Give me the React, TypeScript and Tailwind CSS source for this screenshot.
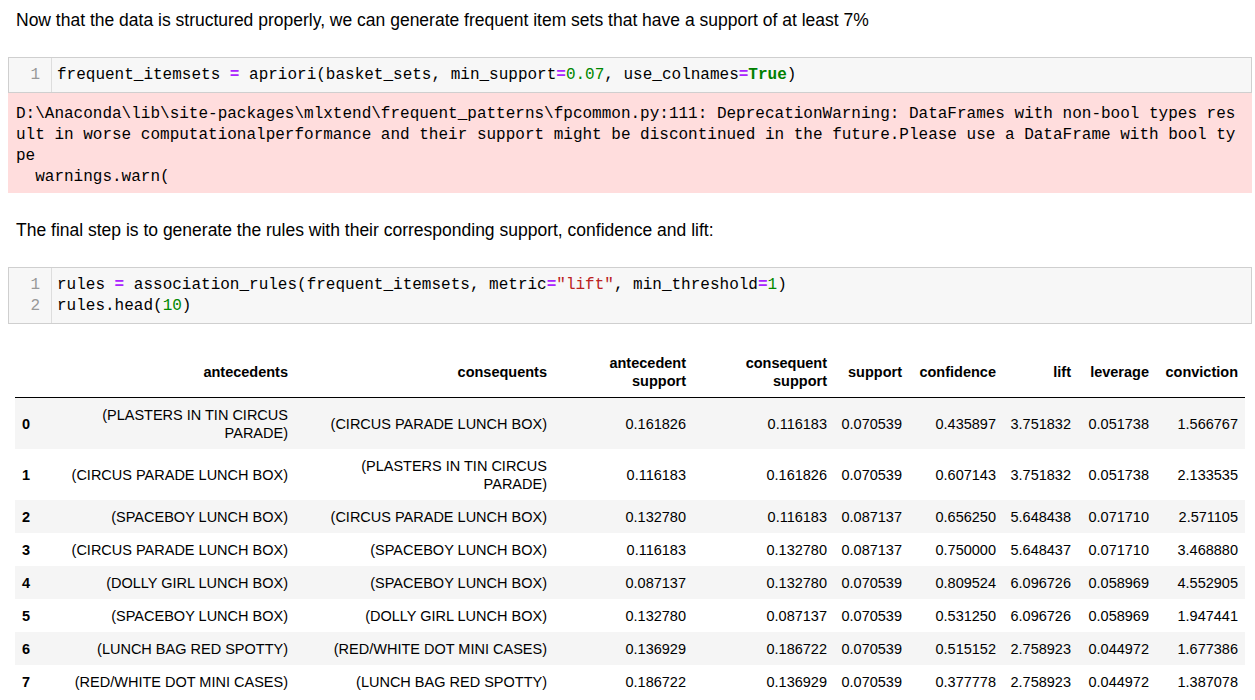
import React from 'react';

const rows = [
  ['0', '(PLASTERS IN TIN CIRCUS PARADE)', '(CIRCUS PARADE LUNCH BOX)', '0.161826', '0.116183', '0.070539', '0.435897', '3.751832', '0.051738', '1.566767'],
  ['1', '(CIRCUS PARADE LUNCH BOX)', '(PLASTERS IN TIN CIRCUS PARADE)', '0.116183', '0.161826', '0.070539', '0.607143', '3.751832', '0.051738', '2.133535'],
  ['2', '(SPACEBOY LUNCH BOX)', '(CIRCUS PARADE LUNCH BOX)', '0.132780', '0.116183', '0.087137', '0.656250', '5.648438', '0.071710', '2.571105'],
  ['3', '(CIRCUS PARADE LUNCH BOX)', '(SPACEBOY LUNCH BOX)', '0.116183', '0.132780', '0.087137', '0.750000', '5.648437', '0.071710', '3.468880'],
  ['4', '(DOLLY GIRL LUNCH BOX)', '(SPACEBOY LUNCH BOX)', '0.087137', '0.132780', '0.070539', '0.809524', '6.096726', '0.058969', '4.552905'],
  ['5', '(SPACEBOY LUNCH BOX)', '(DOLLY GIRL LUNCH BOX)', '0.132780', '0.087137', '0.070539', '0.531250', '6.096726', '0.058969', '1.947441'],
  ['6', '(LUNCH BAG RED SPOTTY)', '(RED/WHITE DOT MINI CASES)', '0.136929', '0.186722', '0.070539', '0.515152', '2.758923', '0.044972', '1.677386'],
  ['7', '(RED/WHITE DOT MINI CASES)', '(LUNCH BAG RED SPOTTY)', '0.186722', '0.136929', '0.070539', '0.377778', '2.758923', '0.044972', '1.387078'],
];

const headers = [
  { label: '', w: 'w-[49px]' },
  { label: 'antecedents', w: 'w-[231px]' },
  { label: 'consequents', w: 'w-[259px]' },
  { label: 'antecedent support', w: 'w-[139px]' },
  { label: 'consequent support', w: 'w-[141px]' },
  { label: 'support', w: 'w-[75px]' },
  { label: 'confidence', w: 'w-[94px]' },
  { label: 'lift', w: 'w-[75px]' },
  { label: 'leverage', w: 'w-[78px]' },
  { label: 'conviction', w: 'w-[89px]' },
];

const warning = [
  'D:\\Anaconda\\lib\\site-packages\\mlxtend\\frequent_patterns\\fpcommon.py:111: DeprecationWarning: DataFrames with non-bool types res',
  'ult in worse computationalperformance and their support might be discontinued in the future.Please use a DataFrame with bool ty',
  'pe',
  '  warnings.warn(',
];

function Op({ children }: { children: React.ReactNode }) {
  return <span className="text-[#aa22ff] font-bold">{children}</span>;
}

function Num({ children }: { children: React.ReactNode }) {
  return <span className="text-[#008800]">{children}</span>;
}

function CodeCell({ lines }: { lines: React.ReactNode[] }) {
  return (
    <div className="ml-2 mr-[3px] flex border border-[#cfcfcf] bg-[#f7f7f7] font-['Liberation_Mono',monospace] text-[16px] leading-[21px]">
      <div className="w-[43px] shrink-0 border-r border-[#dddddd] pt-[7px] pb-[6px] pr-[11px] text-right text-[#999999]">
        {lines.map((_, i) => (
          <div key={i}>{i + 1}</div>
        ))}
      </div>
      <div className="pt-[7px] pb-[6px] pl-[5px] text-black whitespace-pre">
        {lines.map((l, i) => (
          <div key={i}>{l}</div>
        ))}
      </div>
    </div>
  );
}

export default function App() {
  return (
    <div className="w-[1255px] min-h-[700px] bg-white text-black font-['Liberation_Sans',Arial,sans-serif]">
      <p className="pl-4 pt-2 text-[17.5px] leading-6">
        Now that the data is structured properly, we can generate frequent item sets that have a support of at least 7%
      </p>

      <div className="mt-[25px]">
        <CodeCell
          lines={[
            <>
              frequent_itemsets <Op>=</Op> apriori(basket_sets, min_support<Op>=</Op>
              <Num>0.07</Num>, use_colnames<Op>=</Op>
              <span className="font-bold text-[#008000]">True</span>)
            </>,
          ]}
        />
        <div className="ml-2 mr-[3px] bg-[#ffdddd] pt-[11px] pb-[5px] pl-2 font-['Liberation_Mono',monospace] text-[16px] leading-[21px] whitespace-pre">
          {warning.map((l, i) => (
            <div key={i}>{l}</div>
          ))}
        </div>
      </div>

      <p className="mt-[25px] pl-4 text-[17.5px] leading-6">
        The final step is to generate the rules with their corresponding support, confidence and lift:
      </p>

      <div className="mt-[25px]">
        <CodeCell
          lines={[
            <>
              rules <Op>=</Op> association_rules(frequent_itemsets, metric<Op>=</Op>
              <span className="text-[#ba2121]">"lift"</span>, min_threshold<Op>=</Op>
              <Num>1</Num>)
            </>,
            <>
              rules.head(<Num>10</Num>)
            </>,
          ]}
        />
      </div>

      <table className="mt-[22px] ml-[15px] table-fixed border-collapse text-[14.5px] leading-[18px]">
        <thead>
          <tr className="border-b border-black">
            {headers.map((h, i) => (
              <th key={i} className={`${h.w} px-[7px] pt-[8px] pb-[7px] text-right align-middle font-bold`}>
                {h.label}
              </th>
            ))}
          </tr>
        </thead>
        <tbody>
          {rows.map((r, ri) => (
            <tr key={ri} className={ri % 2 === 0 ? 'bg-[#f5f5f5]' : 'bg-white'}>
              {r.map((c, ci) =>
                ci === 0 ? (
                  <th key={ci} className="px-[7px] pt-[8px] pb-[7px] text-left align-middle font-bold">
                    {c}
                  </th>
                ) : (
                  <td key={ci} className="px-[7px] pt-[8px] pb-[7px] text-right align-middle">
                    {c}
                  </td>
                )
              )}
            </tr>
          ))}
        </tbody>
      </table>
    </div>
  );
}
